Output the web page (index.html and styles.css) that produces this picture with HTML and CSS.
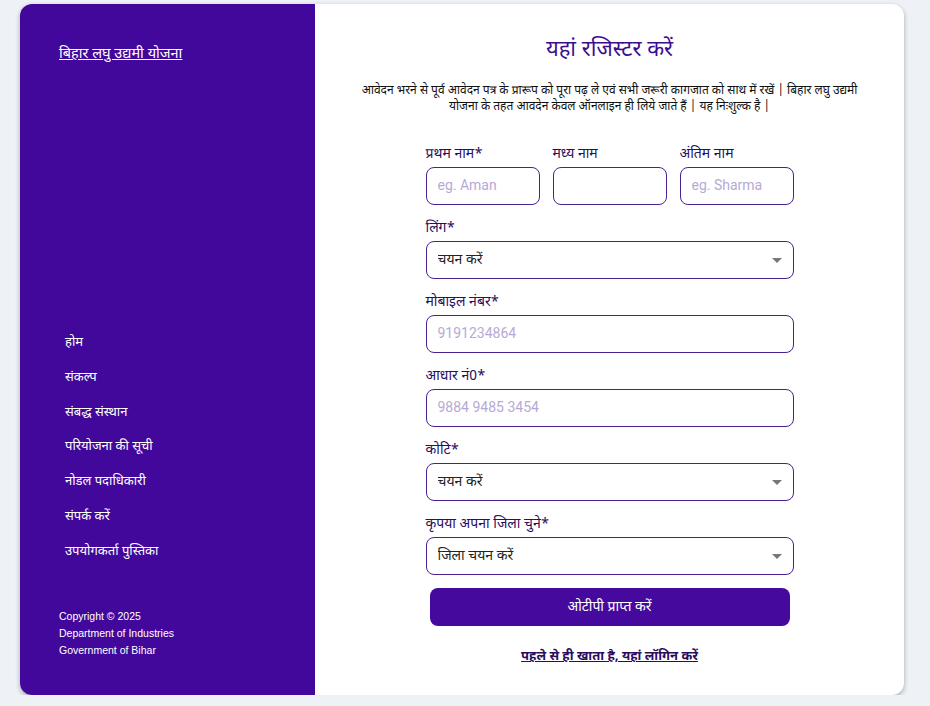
FILE: index.html
```html
<!DOCTYPE html>
<html lang="hi">
<head>
  <meta charset="UTF-8">
  <meta name="viewport" content="width=device-width, initial-scale=1.0">
  <title>बिहार लघु उद्यमी योजना - पंजीकरण</title>
  <link rel="stylesheet" href="styles.css">
</head>
<body>
  <div class="card">
    <aside class="sidebar">
      <a class="brand" href="#">बिहार लघु उद्यमी योजना</a>
      <nav class="menu">
        <a href="#">होम</a>
        <a href="#">संकल्प</a>
        <a href="#">संबद्ध संस्थान</a>
        <a href="#">परियोजना की सूची</a>
        <a href="#">नोडल पदाधिकारी</a>
        <a href="#">संपर्क करें</a>
        <a href="#">उपयोगकर्ता पुस्तिका</a>
      </nav>
      <div class="copyright">
        <p>Copyright © 2025</p>
        <p>Department of Industries</p>
        <p>Government of Bihar</p>
      </div>
    </aside>

    <main class="content">
      <h1>यहां रजिस्टर करें</h1>
      <p class="intro">आवेदन भरने से पूर्व आवेदन पत्र के प्रारूप को पूरा पढ़ ले एवं सभी जरूरी कागजात को साथ में रखें | बिहार लघु उद्यमी योजना के तहत आवदेन केवल ऑनलाइन ही लिये जाते हैं | यह निःशुल्क है |</p>

      <form class="register-form">
        <div class="name-row">
          <div class="form-group">
            <label for="firstName">प्रथम नाम*</label>
            <input type="text" id="firstName" placeholder="eg. Aman">
          </div>
          <div class="form-group">
            <label for="middleName">मध्य नाम</label>
            <input type="text" id="middleName">
          </div>
          <div class="form-group">
            <label for="lastName">अंतिम नाम</label>
            <input type="text" id="lastName" placeholder="eg. Sharma">
          </div>
        </div>

        <div class="form-group">
          <label for="gender">लिंग*</label>
          <div class="select-wrap">
            <select id="gender">
              <option>चयन करें</option>
            </select>
          </div>
        </div>

        <div class="form-group">
          <label for="mobile">मोबाइल नंबर*</label>
          <input type="text" id="mobile" placeholder="9191234864">
        </div>

        <div class="form-group">
          <label for="aadhaar">आधार नं0*</label>
          <input type="text" id="aadhaar" placeholder="9884 9485 3454">
        </div>

        <div class="form-group">
          <label for="category">कोटि*</label>
          <div class="select-wrap">
            <select id="category">
              <option>चयन करें</option>
            </select>
          </div>
        </div>

        <div class="form-group">
          <label for="district">कृपया अपना जिला चुने*</label>
          <div class="select-wrap">
            <select id="district">
              <option>जिला चयन करें</option>
            </select>
          </div>
        </div>

        <button type="submit">ओटीपी प्राप्त करें</button>
      </form>

      <a class="login-link" href="#">पहले से ही खाता है, यहां लॉगिन करें</a>
    </main>
  </div>
</body>
</html>
```

FILE: styles.css
```css
body {
  font-family: "Noto Sans Devanagari", "Noto Sans", Arial, sans-serif;
  background-color: #eef1f6;
  margin: 0;
  padding: 4px 26px 0 20px;
}

.card {
  display: flex;
  height: 691px;
  background-color: #fff;
  border-radius: 12px;
  overflow: hidden;
  box-shadow: 0 2px 5px rgba(0, 0, 0, 0.3);
}

/* left purple panel */
.sidebar {
  width: 295px;
  flex-shrink: 0;
  background-color: #42089b;
  color: #fff;
  padding: 38px 0 0 39px;
  box-sizing: border-box;
  display: flex;
  flex-direction: column;
}

.brand {
  color: #fff;
  font-size: 14.5px;
  line-height: 26px;
  align-self: flex-start;
}

.menu {
  display: flex;
  flex-direction: column;
  margin-top: 265px;
  padding-left: 6px;
}

.menu a {
  color: #fff;
  text-decoration: none;
  font-size: 13px;
  line-height: 20px;
  margin-bottom: 14.8px;
}

.copyright {
  margin-top: 31px;
  font-family: "Liberation Sans", Arial, sans-serif;
  font-size: 10.5px;
}

.copyright p {
  margin: 0;
  line-height: 17px;
}

/* right form panel */
.content {
  flex: 1;
  display: flex;
  flex-direction: column;
  align-items: center;
  padding-top: 32px;
}

h1 {
  margin: 0;
  font-size: 22px;
  line-height: 30px;
  font-weight: normal;
  color: #3c0e8e;
}

.intro {
  width: 510px;
  margin: 17px 0 0;
  text-align: center;
  font-size: 12px;
  line-height: 16px;
  color: #111;
}

.register-form {
  width: 368px;
  margin-top: 30px;
  display: flex;
  flex-direction: column;
}

.name-row {
  display: flex;
  gap: 13px;
}

.name-row .form-group {
  flex: 1;
}

.form-group {
  display: flex;
  flex-direction: column;
  margin-bottom: 14px;
}

label {
  font-size: 14px;
  line-height: 20px;
  color: #2a0d5e;
  margin-bottom: 2px;
}

input[type="text"], select {
  height: 38px;
  width: 100%;
  box-sizing: border-box;
  padding: 0 11px;
  border: 1px solid #4a2191;
  border-radius: 8px;
  background-color: #fff;
  font-family: "Noto Sans Devanagari", "Noto Sans", Arial, sans-serif;
  font-size: 14px;
  color: #222;
  outline: none;
}

input::placeholder {
  font-family: Roboto, "Liberation Sans", sans-serif;
  color: #b7a9d6;
}

.select-wrap {
  position: relative;
}

select {
  appearance: none;
  -webkit-appearance: none;
}

.select-wrap::after {
  content: "";
  position: absolute;
  right: 12px;
  top: 17px;
  border-left: 5px solid transparent;
  border-right: 5px solid transparent;
  border-top: 5px solid #777;
  pointer-events: none;
}

button {
  margin: -1px 4px 0;
  height: 38px;
  background-color: #45099e;
  color: #fff;
  border: none;
  border-radius: 8px;
  font-family: "Noto Sans Devanagari", "Noto Sans", Arial, sans-serif;
  font-size: 14px;
  cursor: pointer;
}

.login-link {
  margin-top: 22px;
  font-size: 13px;
  font-weight: bold;
  color: #2a0d5e;
}
```
